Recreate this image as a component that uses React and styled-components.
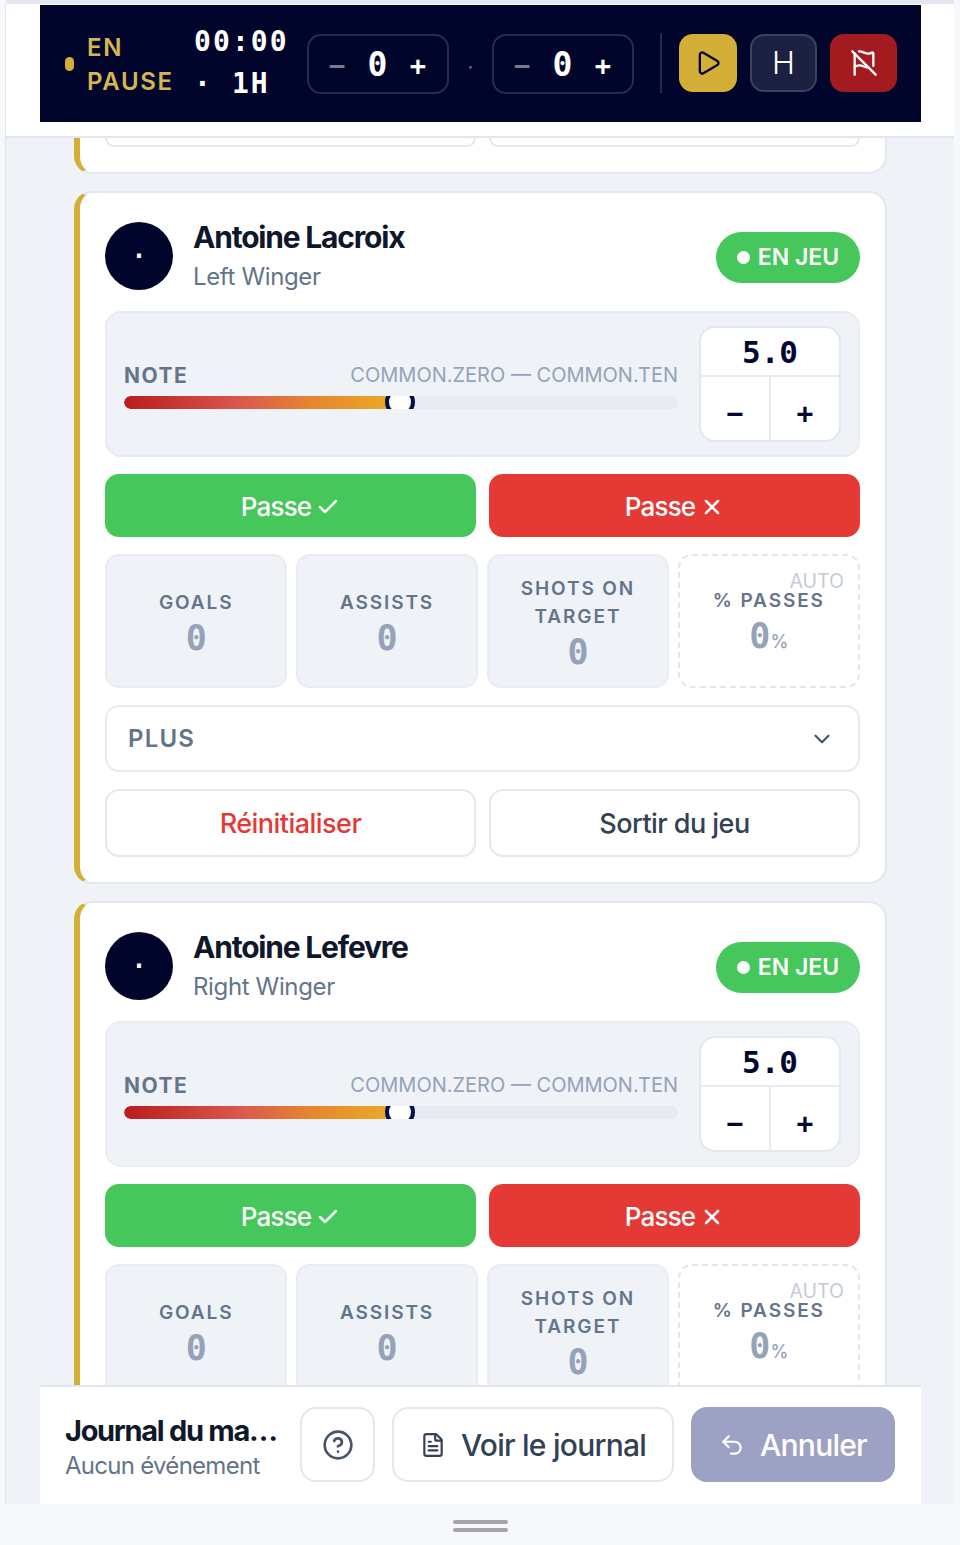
import React from "react";
import styled, { createGlobalStyle } from "styled-components";
import { Play, FlagOff, CircleHelp, FileText, Undo2, ChevronDown, Check, X } from "lucide-react";

const sans = `Inter, "Noto Sans", sans-serif`;
const mono = `"DejaVu Sans Mono", "Liberation Mono", monospace`;

const Global = createGlobalStyle`
  html, body { margin: 0; padding: 0; background: #f7f8fc; }
  * { box-sizing: border-box; }
  button { font-family: inherit; cursor: pointer; padding: 0; }
`;

const Page = styled.div`
  width: 960px; height: 1545px; overflow: hidden;
  display: flex; flex-direction: column;
  background: #f7f8fc; font-family: ${sans};
`;
const TopStrip = styled.div`height: 4px; background: #e3e7ef; margin: 0 6px 0 6px;`;
const Frame = styled.div`
  flex: 1; min-height: 0; margin: 0 6px; display: flex; flex-direction: column;
  background: #eff2f7; box-shadow: -1px 0 0 #dfe3ec;
`;
const Header = styled.header`
  height: 134px; flex: none; background: #fff; padding: 1px 33px 0 34px;
  border-bottom: 2px solid #e4e7ee; position: relative; z-index: 2;
`;
const Bar = styled.div`
  height: 117px; background: #01052b; display: flex; align-items: center; padding: 0 24px 0 25px;
`;
const StatusDot = styled.span`width: 9px; height: 14px; border-radius: 5px; background: #d4af37; flex: none;`;
const Status = styled.div`
  width: 107px; margin-left: 13px; margin-top: 2px; flex: none; color: #d6b651; font-size: 24px; line-height: 34px;
  font-weight: 600; letter-spacing: 0.07em;
`;
const Clock = styled.div`
  width: 100px; flex: none; color: #fff; font-family: ${mono}; font-weight: 700; font-size: 28px;
  letter-spacing: 2.1px; line-height: 42px; margin-right: 13px; margin-top: -2px;
`;
const Score = styled.div`
  width: 142px; height: 60px; flex: none; border: 2px solid #262b4a; border-radius: 14px;
  display: grid; grid-template-columns: 1fr 1fr 1fr; align-items: center; justify-items: center;
  color: #fff; font-family: ${mono}; font-weight: 700; padding: 0 9px 0 8px;
`;
const ScoreNum = styled.span`font-size: 33px; margin-top: 2px;`;
const ScoreSign = styled.span`font-size: 27px; margin-top: 4px; color: ${p => (p.$muted ? "#777b90" : "#fff")};`;
const Sep = styled.span`width: 43px; flex: none; text-align: center; color: #6b6f85; font-size: 20px; margin-top: 6px;`;
const Divider = styled.span`width: 2px; height: 60px; background: #262b4a; margin: -2px 17px 0 26px; flex: none;`;
const CtrlRow = styled.div`display: flex; gap: 13px; margin-top: -2px;`;
const Ctrl = styled.button`
  height: 58px; width: ${p => p.$w}px; border-radius: 14px; display: flex; align-items: center; justify-content: center;
  background: ${p => p.$bg}; border: ${p => (p.$line ? `2px solid ${p.$line}` : "none")}; color: ${p => p.$fg};
  font-size: 31px; font-weight: 300;
`;

const Scroller = styled.main`
  flex: 1; min-height: 0; overflow: hidden; padding: 0 67px 0 68px; display: flex; flex-direction: column; gap: 17px;
`;
const Stub = styled.div`
  height: 36px; flex: none; background: #fff; border: 2px solid #e4e7ee; border-top: none; border-left: 6px solid #d4af37;
  border-radius: 0 0 18px 18px; padding: 0 25px; display: grid; grid-template-columns: 1fr 1fr; gap: 13px;
`;
const StubBtn = styled.div`height: 9px; border: 2px solid #e4e7ee; border-top: none; border-radius: 0 0 14px 14px;`;
const Card = styled.article`
  flex: none; height: 693px; background: #fff; border: 2px solid #e4e7ee; border-left: 6px solid #d4af37;
  border-radius: 18px; padding: 29px 25px 0; display: flex; flex-direction: column;
`;
const Head = styled.div`display: flex; align-items: center; height: 68px;`;
const Avatar = styled.div`
  width: 68px; height: 68px; border-radius: 50%; background: #01052b; color: #fff; flex: none;
  display: flex; align-items: center; justify-content: center; font-family: ${mono}; font-weight: 700; font-size: 24px;
`;
const Who = styled.div`flex: 1; margin-left: 20px;`;
const Name = styled.div`font-size: 30px; font-weight: 700; letter-spacing: -0.04em; line-height: 34px; color: #0f172a; margin-top: 0;`;
const Role = styled.div`font-size: 24px; font-weight: 400; letter-spacing: -0.015em; line-height: 30px; color: #64748b; margin-top: 8px;`;
const Pill = styled.div`
  width: 144px; height: 51px; border-radius: 26px; background: #46c75b; color: #fff; font-size: 23px; font-weight: 600;
  display: flex; align-items: center; justify-content: center; gap: 8px; margin-top: 2px; letter-spacing: 0;
`;
const PillDot = styled.span`width: 13px; height: 13px; border-radius: 50%; background: #fff;`;

const Panel = styled.section`
  margin-top: 21px; height: 146px; background: #eff2f7; border: 2px solid #e9ecf3; border-radius: 16px;
  padding: 13px 17px 0 17px; display: flex; gap: 21px;
`;
const RateCol = styled.div`flex: 1; padding-top: 36px;`;
const RateLabels = styled.div`display: flex; justify-content: space-between; align-items: center; height: 26px;`;
const RateLabel = styled.span`font-size: 21px; font-weight: 700; letter-spacing: 0.07em; color: #64748b;`;
const RateRange = styled.span`font-size: 20px; font-weight: 400; letter-spacing: 0; color: #94a3b8; white-space: nowrap;`;
const Track = styled.div`
  margin-top: 8px; height: 13px; border-radius: 7px; background: #e8eaf0; position: relative; overflow: hidden;
`;
const Fill = styled.div`
  height: 100%; border-radius: 7px 0 0 7px; background: linear-gradient(90deg, #b91c1c 0%, #db5a4e 45%, #e6852f 70%, #eaa928 100%);
`;
const Thumb = styled.div`
  position: absolute; top: -9px; width: 30px; height: 30px; border-radius: 50%; background: #fff; border: 4px solid #01104f;
`;
const Stepper = styled.div`
  width: 142px; height: 116px; flex: none; background: #fff; border: 2px solid #e4e7ee; border-radius: 16px; overflow: hidden;
  display: grid; grid-template-rows: 49px 1fr; grid-template-columns: 68px 1fr; color: #020833; font-family: ${mono}; font-weight: 700;
`;
const StepVal = styled.div`grid-column: 1 / 3; display: flex; align-items: center; justify-content: center; font-size: 31px; letter-spacing: 0; border-bottom: 2px solid #e8ebf2;`;
const StepBtn = styled.div`display: flex; align-items: center; justify-content: center; font-size: 28px; padding-top: 10px; & + & { border-left: 2px solid #e8ebf2; }`;

const TwoCol = styled.div`display: grid; grid-template-columns: 1fr 1fr; gap: 13px; margin-top: ${p => p.$mt}px;`;
const Action = styled.button`
  height: 63px; border: none; border-radius: 14px; background: ${p => p.$bg}; color: #fff; font-size: 26px; font-weight: 500;
  letter-spacing: -0.03em; display: flex; align-items: center; justify-content: center; gap: 5px; padding-top: 2px;
`;
const Stats = styled.div`display: grid; grid-template-columns: repeat(4, 1fr); gap: 8.5px; margin-top: 17px;`;
const Stat = styled.div`
  height: 134px; border-radius: 14px; position: relative; display: flex; flex-direction: column; align-items: center; justify-content: center;
  background: ${p => (p.$auto ? "#fff" : "#eff2f7")}; border: 2px ${p => (p.$auto ? "dashed #e4e7ee" : "solid #e9ecf3")}; padding: ${p => (p.$auto ? "8px" : "6px")} 8px 0;
`;
const Auto = styled.span`position: absolute; top: 15px; right: 14px; font-size: 19.5px; line-height: 20px; color: #c3ccd9;`;
const StatLabel = styled.div`font-size: 19px; font-weight: 600; letter-spacing: 0.1em; line-height: 28px; color: #64748b; text-align: center;`;
const StatValue = styled.div`font-family: ${mono}; font-weight: 700; font-size: 35px; line-height: 42px; margin-top: 0; color: #94a3b8;`;
const Pct = styled.span`font-size: 18px; font-family: ${sans}; font-weight: 500;`;
const More = styled.div`
  margin-top: 17px; height: 67px; border: 2px solid #e8ebf0; border-radius: 14px; padding: 0 23px 0 21px;
  display: flex; align-items: center; justify-content: space-between; font-size: 24px; font-weight: 600; letter-spacing: 0.05em; color: #64748b;
`;
const Ghost = styled.button`
  height: 68px; background: #fff; border: 2px solid #e4e7ee; border-radius: 14px; font-size: 27px; font-weight: 500; letter-spacing: -0.02em;
  color: ${p => p.$fg};
`;

const Footer = styled.footer`
  flex: none; height: 119px; margin: 0 33px 0 34px; background: #fff; border-top: 2px solid #e2e4ee; padding: 20px 26px 0 25px;
  display: flex; align-items: flex-start; position: relative; z-index: 2;
`;
const Journal = styled.div`width: 235px; flex: none;`;
const JTitle = styled.div`font-size: 29px; font-weight: 700; letter-spacing: -0.045em; line-height: 34px; color: #0f172a; margin-top: 7px; white-space: nowrap;`;
const JSub = styled.div`font-size: 24px; letter-spacing: -0.03em; line-height: 30px; color: #64748b; margin-top: 3px;`;
const FootBtn = styled.button`
  height: 75px; width: ${p => p.$w}px; margin-left: ${p => p.$ml}px; flex: none; border-radius: 16px; display: flex; align-items: center; justify-content: center; gap: 15px;
  background: ${p => p.$bg || "#fff"}; border: ${p => (p.$bg ? "none" : "2px solid #e4e7ee")}; color: ${p => p.$fg || "#334155"};
  font-size: 30px; font-weight: 500; letter-spacing: -0.025em;
`;
const Dock = styled.div`flex: none; height: 41px; margin: 0 -6px; display: flex; flex-direction: column; align-items: center; gap: 4px; padding-top: 16px; background: #f7f8fc;`;
const Grip = styled.span`width: 55px; height: 4px; background: #a6a6a8; border-radius: 2px;`;

const players = [
  { name: "Antoine Lacroix", role: "Left Winger" },
  { name: "Antoine Lefevre", role: "Right Winger", belowFold: true },
];

const stats = [
  { label: "GOALS" },
  { label: "ASSISTS" },
  { label: "SHOTS ON TARGET" },
];

function PlayerCard({ name, role, belowFold }) {
  return (
    <Card>
      <Head>
        <Avatar>·</Avatar>
        <Who>
          <Name>{name}</Name>
          <Role>{role}</Role>
        </Who>
        <Pill><PillDot />EN JEU</Pill>
      </Head>
      <Panel>
        <RateCol>
          <RateLabels>
            <RateLabel>NOTE</RateLabel>
            <RateRange>COMMON.ZERO — COMMON.TEN</RateRange>
          </RateLabels>
          <Track>
            <Fill style={{ width: "48%" }} />
            <Thumb style={{ left: "47.2%" }} />
          </Track>
        </RateCol>
        <Stepper>
          <StepVal>5.0</StepVal>
          <StepBtn>−</StepBtn>
          <StepBtn>+</StepBtn>
        </Stepper>
      </Panel>
      <TwoCol $mt={17}>
        <Action $bg="#46c75b">Passe <Check size={24} strokeWidth={2.5} /></Action>
        <Action $bg="#e53935">Passe <X size={24} strokeWidth={2.5} /></Action>
      </TwoCol>
      <Stats>
        {stats.map(s => (
          <Stat key={s.label}>
            <StatLabel>{s.label}</StatLabel>
            <StatValue>0</StatValue>
          </Stat>
        ))}
        <Stat $auto>
          <Auto>AUTO</Auto>
          <StatLabel>% PASSES</StatLabel>
          <StatValue>0<Pct>%</Pct></StatValue>
        </Stat>
      </Stats>
      {!belowFold && (
        <>
          <More>PLUS <ChevronDown size={26} strokeWidth={2} color="#475569" /></More>
          <TwoCol $mt={17}>
            <Ghost $fg="#e53935">Réinitialiser</Ghost>
            <Ghost $fg="#334155">Sortir du jeu</Ghost>
          </TwoCol>
        </>
      )}
    </Card>
  );
}

function ScoreBox() {
  return (
    <Score>
      <ScoreSign $muted>−</ScoreSign>
      <ScoreNum>0</ScoreNum>
      <ScoreSign>+</ScoreSign>
    </Score>
  );
}

export default function App() {
  return (
    <Page>
      <Global />
      <TopStrip />
      <Frame>
        <Header>
          <Bar>
            <StatusDot />
            <Status>EN PAUSE</Status>
            <Clock>00:00 · 1H</Clock>
            <ScoreBox />
            <Sep>·</Sep>
            <ScoreBox />
            <Divider />
            <CtrlRow>
              <Ctrl $w={58} $bg="#d4af37" $fg="#01052b"><Play size={28} strokeWidth={2} /></Ctrl>
              <Ctrl $w={67} $bg="#1c2142" $line="#3c415e" $fg="#fff">H</Ctrl>
              <Ctrl $w={67} $bg="#a31b1f" $fg="#fff"><FlagOff size={28} strokeWidth={2} /></Ctrl>
            </CtrlRow>
          </Bar>
        </Header>
        <Scroller>
          <Stub><StubBtn /><StubBtn /></Stub>
          {players.map(p => <PlayerCard key={p.name} {...p} />)}
        </Scroller>
        <Footer>
          <Journal>
            <JTitle>Journal du ma…</JTitle>
            <JSub>Aucun événement</JSub>
          </Journal>
          <FootBtn $w={75} $fg="#475569"><CircleHelp size={32} strokeWidth={2} /></FootBtn>
          <FootBtn $w={282} $ml={17}><FileText size={26} strokeWidth={2} />Voir le journal</FootBtn>
          <FootBtn $w={204} $ml={17} $bg="#9da1c4" $fg="#fff"><Undo2 size={26} strokeWidth={2} />Annuler</FootBtn>
        </Footer>
        <Dock><Grip /><Grip /></Dock>
      </Frame>
    </Page>
  );
}
